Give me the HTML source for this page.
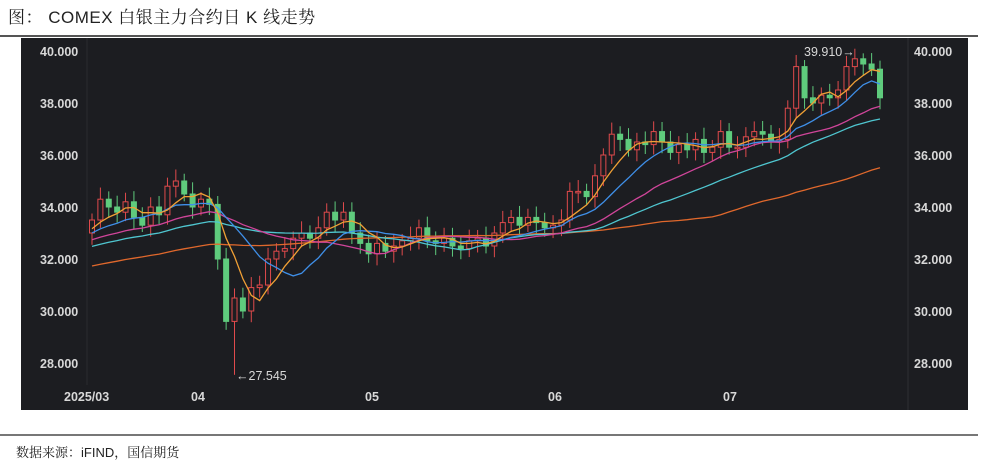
<!DOCTYPE html>
<html><head><meta charset="utf-8"><style>
body{margin:0;width:985px;height:464px;background:#fff;position:relative;overflow:hidden;font-family:"Liberation Sans","Noto Serif CJK SC",serif}
.t{position:absolute;left:8px;top:3px;font-size:17px;color:#222;font-family:"Liberation Sans","Noto Serif CJK SC",serif;letter-spacing:0.5px}
.l1{position:absolute;left:0;top:35px;width:978px;height:2px;background:#555}
.l2{position:absolute;left:0;top:434px;width:978px;height:2px;background:#777}
.src{position:absolute;left:16px;top:442px;font-size:13px;color:#222}
svg{position:absolute;left:21px;top:38px}
</style></head><body>
<div class="t">图： COMEX 白银主力合约日 K 线走势</div>
<div class="l1"></div>
<svg id="c" width="947" height="372" viewBox="21 38 947 372"><rect x="21" y="38" width="947" height="372" fill="#1c1d21"/>
<g font-family="Liberation Sans,sans-serif" font-size="12.5" fill="#d8d8d8" font-weight="bold">
<text x="40" y="56">40.000</text><text x="40" y="108">38.000</text><text x="40" y="160">36.000</text><text x="40" y="212">34.000</text><text x="40" y="264">32.000</text><text x="40" y="316">30.000</text><text x="40" y="368">28.000</text>
<text x="914" y="56">40.000</text><text x="914" y="108">38.000</text><text x="914" y="160">36.000</text><text x="914" y="212">34.000</text><text x="914" y="264">32.000</text><text x="914" y="316">30.000</text><text x="914" y="368">28.000</text>
<text x="64" y="401">2025/03</text><text x="191" y="401">04</text><text x="365" y="401">05</text><text x="548" y="401">06</text><text x="723" y="401">07</text>
<text x="236" y="380" font-weight="normal">←27.545</text><text x="804" y="56" font-weight="normal">39.910→</text>
</g>
<line x1="87" y1="38" x2="87" y2="385" stroke="#2a2b30"/><line x1="908" y1="38" x2="908" y2="410" stroke="#2e2f34"/>
<g id="g"></g></svg>
<div class="l2"></div>
<div class="src">数据来源：iFIND，国信期货</div>
<script>
var C=[33.5,34.3,34.0,33.8,34.2,33.6,33.3,34.0,33.7,34.8,35.0,34.5,34.0,34.3,34.1,32.0,29.6,30.5,30.0,30.9,31.0,32.0,32.3,32.4,32.8,33.0,32.8,33.2,33.8,33.5,33.8,33.0,32.6,32.2,32.6,32.3,32.5,32.7,32.8,33.2,32.7,32.6,32.8,32.5,32.4,32.7,32.8,32.5,33.0,33.4,33.6,33.3,33.6,33.4,33.2,33.3,33.5,34.6,34.6,34.4,35.2,36.0,36.8,36.6,36.2,36.5,36.4,36.9,36.5,36.1,36.4,36.2,36.6,36.1,36.3,36.9,36.3,36.3,36.7,36.9,36.8,36.5,36.6,37.8,39.4,38.2,38.0,38.3,38.2,38.5,39.4,39.7,39.5,39.3,38.2];
var n=C.length,x0=92,x1=880,dx=(x1-x0)/(n-1);
function Y(v){return 51+(40-v)*26}
var h='',pre=[];for(var i=0;i<60;i++)pre.push(30.2+0.05*i);
var all=pre.concat(C);
for(var i=0;i<n;i++){var o=i?C[i-1]:33.0,c=C[i],x=x0+i*dx;var hi=Math.max(o,c)+0.25+0.2*Math.abs(Math.sin(i*1.7)),lo=Math.min(o,c)-0.25-0.2*Math.abs(Math.cos(i*1.3));
if(i==17)lo=27.545;if(i==92)hi=39.91;
var up=c>=o,col=up?'#e04a4c':'#5fcb7d';
h+='<line x1="'+x+'" y1="'+Y(hi)+'" x2="'+x+'" y2="'+Y(lo)+'" stroke="'+col+'"/>';
var t=Y(Math.max(o,c)),b=Math.max(Y(Math.min(o,c))-t,1.5);
h+='<rect x="'+(x-2.5)+'" y="'+t+'" width="5" height="'+b+'" fill="'+(up?'#1c1d21':col)+'" stroke="'+col+'"/>';}
function ma(p,col){var d='';for(var i=0;i<n;i++){var s=0;for(var k=0;k<p;k++)s+=all[60+i-k];d+=(i?'L':'M')+(x0+i*dx).toFixed(1)+' '+Y(s/p).toFixed(1);}h+='<path d="'+d+'" fill="none" stroke="'+col+'" stroke-width="1.3"/>';}
ma(60,'#e0682c');ma(30,'#4fc6d0');ma(20,'#d0459a');ma(10,'#3f8fe8');ma(5,'#f0a035');
document.getElementById('g').innerHTML=h;
</script>
</body></html>
